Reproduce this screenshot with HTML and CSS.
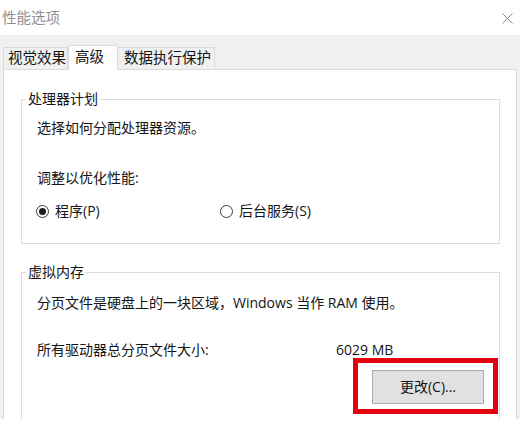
FILE: index.html
```html
<!DOCTYPE html>
<html lang="zh-CN">
<head>
<meta charset="utf-8">
<title>性能选项</title>
<link rel="stylesheet" href="styles.css">
</head>
<body>
<div class="window">
  <div class="titlebar">
    <span class="title">性能选项</span>
    <svg class="close" width="11" height="11" viewBox="0 0 11 11"><path d="M0.5 0.5L10.5 10.5M10.5 0.5L0.5 10.5" stroke="#8a8a8a" stroke-width="1" fill="none"/></svg>
  </div>
  <div class="client">
    <div class="tabs">
      <div class="tab t1">视觉效果</div>
      <div class="tab t2 active">高级</div>
      <div class="tab t3">数据执行保护</div>
    </div>
    <div class="panel">
      <div class="group g1">
        <div class="group-title">处理器计划</div>
        <div class="line l1">选择如何分配处理器资源。</div>
        <div class="line l2">调整以优化性能:</div>
        <div class="radios">
          <div class="radio"><span class="dot checked"></span><span>程序(P)</span></div>
          <div class="radio"><span class="dot"></span><span>后台服务(S)</span></div>
        </div>
      </div>
      <div class="group g2">
        <div class="group-title">虚拟内存</div>
        <div class="line l3">分页文件是硬盘上的一块区域，Windows 当作 RAM 使用。</div>
        <div class="size-row">
          <span>所有驱动器总分页文件大小:</span>
          <span>6029 MB</span>
        </div>
        <div class="button-row">
          <div class="highlight">
            <div class="button">更改(C)...</div>
          </div>
        </div>
      </div>
    </div>
  </div>
</div>
</body>
</html>
```

FILE: styles.css
```css
html, body {
  margin: 0;
  padding: 0;
  background: #ffffff;
}

body {
  font-family: "Open Sans", "Noto Sans CJK SC", "Microsoft YaHei", sans-serif;
  color: #141414;
  font-size: 14px;
}

.window {
  width: 520px;
  height: 423px;
  overflow: hidden;
  background: #ffffff;
}

.titlebar {
  height: 35px;
  display: flex;
  align-items: center;
  justify-content: space-between;
  padding: 0 7px 0 2px;
  box-sizing: border-box;
}

.title {
  font-size: 14.5px;
  line-height: 20px;
  color: #8f8f8f;
}

.close {
  display: block;
  margin-top: 1px;
}

.client {
  height: 384px;
  box-sizing: border-box;
  padding: 10px 3px 0;
  background: #f0f0f0;
  overflow: hidden;
  display: flex;
  flex-direction: column;
}

.tabs {
  display: flex;
  align-items: flex-end;
  height: 24px;
  position: relative;
  z-index: 1;
}

.tab {
  height: 22px;
  box-sizing: border-box;
  border: 1px solid #dadada;
  border-bottom: none;
  font-size: 14.5px;
  line-height: 20px;
  padding-left: 4px;
  white-space: nowrap;
  background: #f0f0f0;
}

.t1 { width: 65px; }
.t2 { width: 50px; padding-left: 6px; }
.t3 { width: 97px; padding-left: 6px; border-left: none; }

.tab.active {
  height: 25px;
  margin-bottom: -1px;
  background: #ffffff;
  line-height: 22px;
  border-color: #dadada;
}

.panel {
  flex: 1;
  background: #ffffff;
  border: 1px solid #dadada;
  border-bottom: none;
  padding: 29px 16px 0 17px;
}

.group {
  border: 1px solid #dcdcdc;
}

.group-title {
  width: fit-content;
  margin: -11px 0 0 4px;
  padding: 0 2px;
  background: #ffffff;
  line-height: 20px;
}

.line {
  line-height: 20px;
  padding-left: 15px;
  white-space: nowrap;
}

.l1 { margin-top: 9px; }
.l2 { margin-top: 30px; }
.l3 { margin-top: 11px; }

.g1 { padding-bottom: 22px; }

.radios {
  margin-top: 13px;
  padding-left: 14px;
  display: grid;
  grid-template-columns: 184px auto;
  line-height: 20px;
}

.radio {
  display: flex;
  align-items: center;
  gap: 6px;
}

.dot {
  width: 13px;
  height: 13px;
  box-sizing: border-box;
  border: 1px solid #3a3a3a;
  border-radius: 50%;
  display: grid;
  place-items: center;
}

.dot.checked::after {
  content: "";
  width: 7px;
  height: 7px;
  border-radius: 50%;
  background: #1e1e1e;
}

.g2 {
  margin-top: 28px;
  padding-bottom: 40px;
}

.size-row {
  margin-top: 27px;
  padding-left: 15px;
  display: grid;
  grid-template-columns: 299px auto;
  line-height: 20px;
}

.button-row {
  display: flex;
  justify-content: flex-end;
  margin-top: -2px;
  padding-right: 1px;
}

.highlight {
  border: 5px solid #e3000f;
  padding: 7px 9px 5px 14px;
}

.button {
  width: 112px;
  height: 34px;
  box-sizing: border-box;
  border: 1px solid #adadad;
  background: #e1e1e1;
  text-align: center;
  line-height: 31px;
}
```
